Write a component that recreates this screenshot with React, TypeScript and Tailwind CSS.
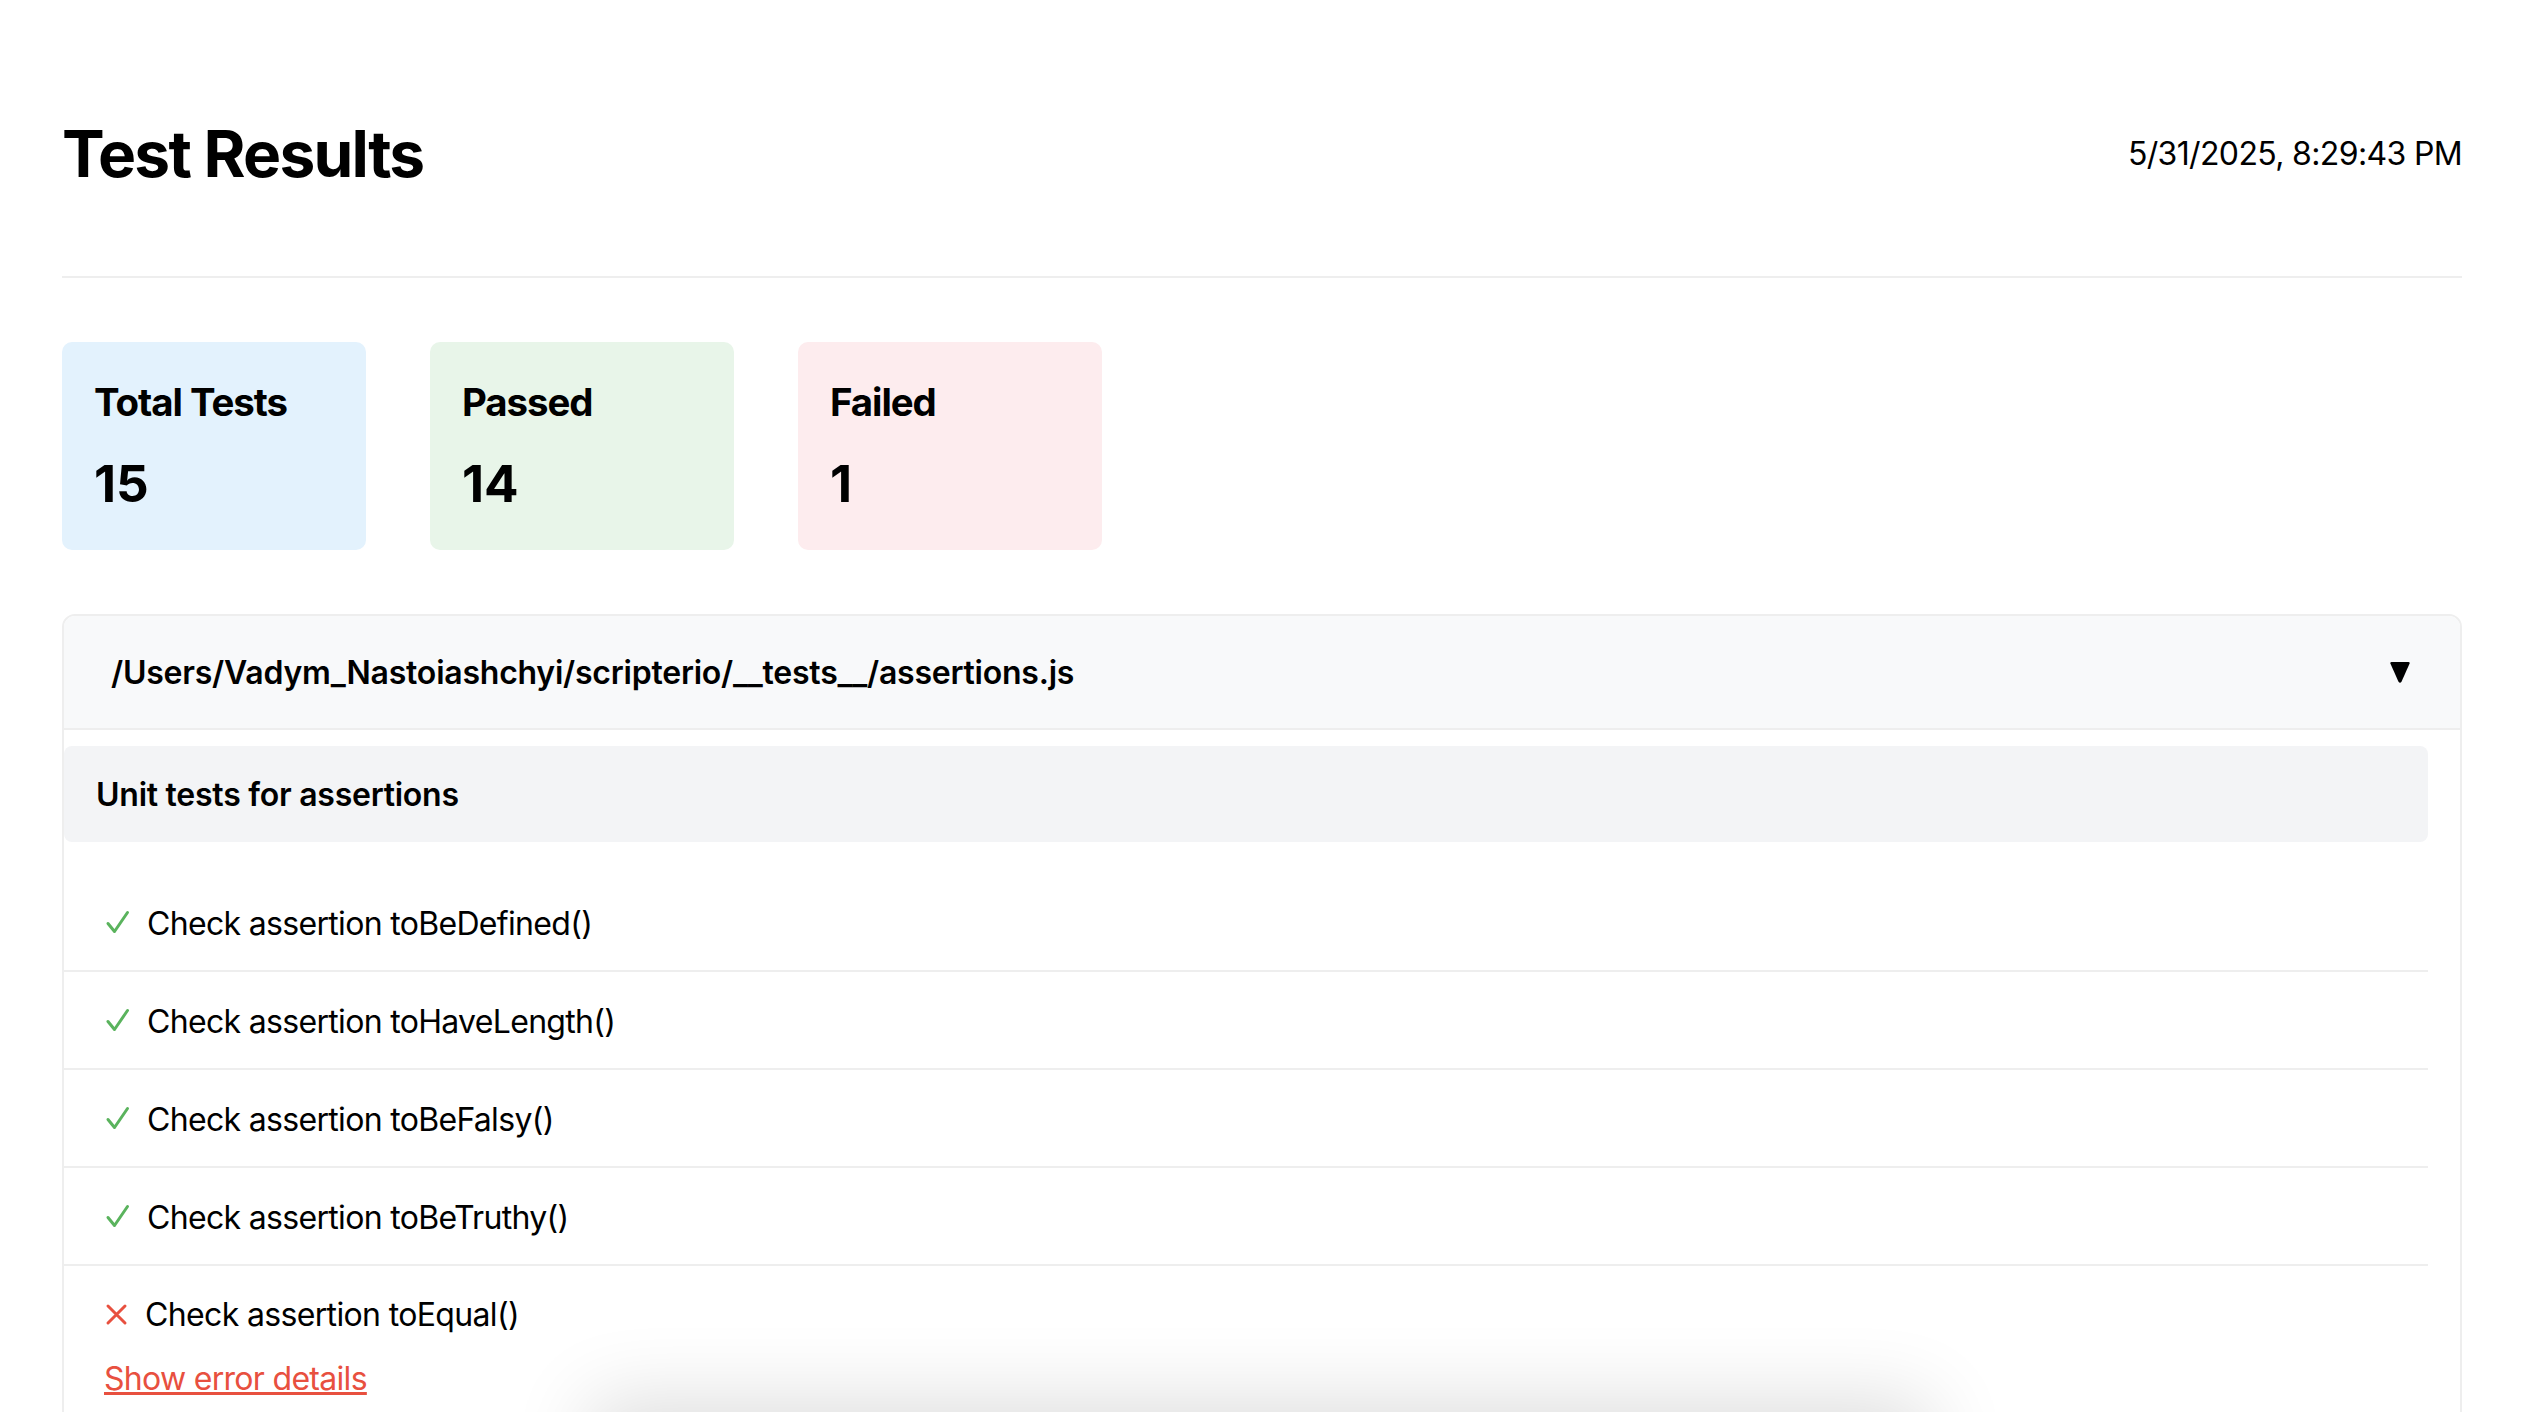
import React from "react";

const Check = () => (
  <svg className="w-[26px] h-[26px] shrink-0" viewBox="0 0 26 26" fill="none" stroke="#5ab35d" strokeWidth="3" strokeLinecap="round" strokeLinejoin="round">
    <path d="M4 14.5 L10.5 22.5 L23.5 3.5" />
  </svg>
);

const Cross = () => (
  <svg className="w-[25px] h-[26px] shrink-0" viewBox="0 0 25 26" fill="none" stroke="#e8503f" strokeWidth="3" strokeLinecap="round">
    <path d="M4 5 L21 22 M21 5 L4 22" />
  </svg>
);

const Stat = ({ label, value, bg }: { label: string; value: string; bg: string }) => (
  <div className={`w-[304px] h-[208px] rounded-[10px] pt-[37px] px-[32px] ${bg}`}>
    <div className="text-[38.4px] leading-[46px] font-bold tracking-[-1.05px]">{label}</div>
    <div className="mt-[33px] text-[51.2px] leading-[50px] font-bold">{value}</div>
  </div>
);

const rows = ["Check assertion toBeDefined()", "Check assertion toHaveLength()", "Check assertion toBeFalsy()", "Check assertion toBeTruthy()"];

export default function App() {
  return (
    <div className="relative h-[1412px] overflow-hidden bg-white text-black font-['Inter',sans-serif] pl-[62px] pr-[60px]">
      <header className="flex items-center justify-between h-[278px] pt-[32px] border-b-2 border-[#eeeeee]">
        <h1 className="text-[64px] leading-[78px] font-bold tracking-[-1.75px]">Test Results</h1>
        <div className="text-[32px] leading-[40px] tracking-[-0.65px]">5/31/2025, 8:29:43 PM</div>
      </header>

      <div className="flex gap-[64px] mt-[64px]">
        <Stat label="Total Tests" value="15" bg="bg-[#e3f2fd]" />
        <Stat label="Passed" value="14" bg="bg-[#e8f5e9]" />
        <Stat label="Failed" value="1" bg="bg-[#fdecee]" />
      </div>

      <section className="mt-[64px] border-2 border-[#eeeeee] rounded-[13px] h-[900px] overflow-hidden">
        <div className="flex items-center justify-between h-[114px] bg-[#f8f9fa] border-b-2 border-[#eeeeee] pl-[47px] pr-[50px]">
          <span className="text-[32px] leading-[40px] pt-[2px] font-semibold tracking-[-0.23px]">/Users/Vadym_Nastoiashchyi/scripterio/__tests__/assertions.js</span>
          <svg className="w-[20px] h-[21px]" viewBox="0 0 20 21" fill="#000"><path d="M1.5 0 H18.5 Q20 0 19.6 1.5 L11.5 19.8 Q10 21.6 8.5 19.8 L0.4 1.5 Q0 0 1.5 0 Z" /></svg>
        </div>
        <div className="pt-[16px] pr-[32px]">
          <div className="flex items-center h-[96px] bg-[#f3f4f6] rounded-[8px] pl-[32px] pt-[2px] text-[32px] font-semibold tracking-[-0.25px]">Unit tests for assertions</div>
          <ul className="mt-[32px]">
            {rows.map((r) => (
              <li key={r} className="flex items-center gap-[17px] h-[98px] pl-[40px] border-b-2 border-[#eeeeee] text-[32px] tracking-[-0.68px]">
                <Check />
                <span className="pt-[3px]">{r}</span>
              </li>
            ))}
            <li className="pl-[40px] pt-[23px] text-[32px] tracking-[-0.65px]">
              <div className="flex items-center gap-[16px]">
                <Cross />
                <span className="pt-[2px]">Check assertion toEqual()</span>
              </div>
              <a className="block mt-[16px] text-[#e8503f] underline tracking-[-0.7px]">Show error details</a>
            </li>
          </ul>
        </div>
      </section>

      <div className="absolute left-[640px] w-[1240px] top-[1450px] h-[100px] bg-[#dddddd] shadow-[0_0_80px_50px_#dddddd]" />
    </div>
  );
}
